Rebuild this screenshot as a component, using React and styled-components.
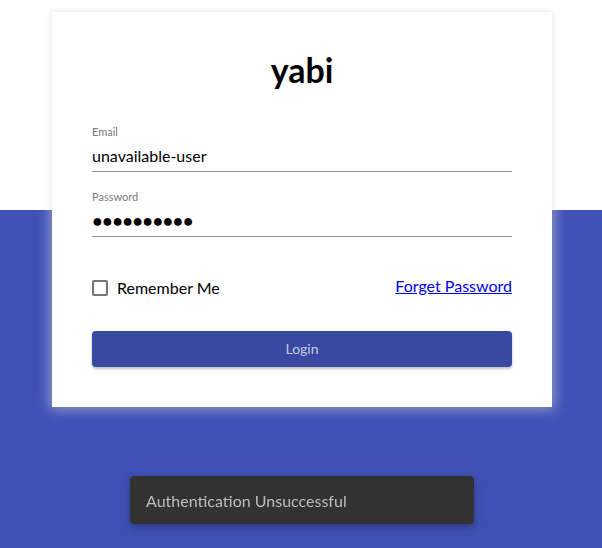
import React from 'react';
import styled, { createGlobalStyle } from 'styled-components';

const GlobalStyle = createGlobalStyle`
  html, body {
    margin: 0;
    padding: 0;
  }
  body {
    font-family: Lato, "Noto Sans", sans-serif;
  }
`;

const Page = styled.div`
  min-height: 100vh;
  padding: 12px 0 0 2px;
  box-sizing: border-box;
  background: linear-gradient(to bottom, #ffffff 0, #ffffff 210px, #3f51b5 210px);
`;

const Card = styled.form`
  width: 500px;
  margin: 0 auto;
  box-sizing: border-box;
  padding: 36px 40px 40px;
  background: #fff;
  box-shadow: 0 0 6px rgba(0, 0, 0, 0.12), 0 0 12px 2px rgba(255, 255, 255, 0.5);
`;

const Title = styled.h1`
  margin: 0 0 33px;
  text-align: center;
  font-size: 34px;
  line-height: 44px;
  font-weight: 700;
  color: #000;
`;

const Field = styled.label`
  display: flex;
  flex-direction: column;
  margin-bottom: ${(p) => p.gap || 0}px;
`;

const FieldLabel = styled.span`
  font-size: 11px;
  line-height: 14px;
  color: #7a7a7a;
`;

const Input = styled.input`
  box-sizing: border-box;
  margin-top: 4px;
  height: 29px;
  padding: 0 0 ${(p) => (p.$dots ? '2px' : '4px')};
  border: none;
  border-bottom: 1px solid #8e8e8e;
  outline: none;
  background: transparent;
  font-family: ${(p) => (p.$dots ? '"Liberation Sans", sans-serif' : 'inherit')};
  font-size: ${(p) => (p.$dots ? '18px' : '16px')};
  letter-spacing: ${(p) => (p.$dots ? '-0.8px' : 'normal')};
  color: #000;
`;

const OptionsRow = styled.div`
  display: flex;
  align-items: center;
  justify-content: space-between;
  margin-top: 38px;
  height: 24px;
`;

const Remember = styled.label`
  display: flex;
  align-items: center;
  gap: 9px;
  font-size: 16px;
  color: #000;
`;

const Box = styled.span`
  width: 16px;
  height: 16px;
  box-sizing: border-box;
  border: 2px solid #757575;
  border-radius: 2px;
  margin-top: 1px;
`;

const ForgetLink = styled.a`
  font-size: 16px;
  color: #0000ee;
  text-decoration: underline;
  margin-top: -4px;
`;

const LoginButton = styled.button`
  display: block;
  width: 100%;
  height: 36px;
  margin-top: 32px;
  border: none;
  border-radius: 4px;
  background: #3948a1;
  color: #c5cae9;
  font-family: inherit;
  font-size: 14px;
  line-height: 34px;
  box-shadow: 0 2px 3px rgba(0, 0, 0, 0.25);
  cursor: pointer;
`;

const Snackbar = styled.div`
  position: fixed;
  left: 50%;
  bottom: 24px;
  transform: translateX(calc(-50% + 1px));
  width: 344px;
  height: 48px;
  box-sizing: border-box;
  padding: 0 16px;
  display: flex;
  align-items: center;
  border-radius: 4px;
  background: #323232;
  color: #bdbdbd;
  font-size: 16px;
  box-shadow: 0 3px 8px rgba(0, 0, 0, 0.3);
`;

const App = () => (
  <>
    <GlobalStyle />
    <Page>
      <Card onSubmit={(e) => e.preventDefault()}>
        <Title>yabi</Title>
        <Field gap={18}>
          <FieldLabel>Email</FieldLabel>
          <Input type="text" defaultValue="unavailable-user" />
        </Field>
        <Field>
          <FieldLabel>Password</FieldLabel>
          <Input type="text" $dots readOnly value={'\u25CF'.repeat(10)} />
        </Field>
        <OptionsRow>
          <Remember>
            <Box />
            Remember Me
          </Remember>
          <ForgetLink href="#">Forget Password</ForgetLink>
        </OptionsRow>
        <LoginButton type="submit">Login</LoginButton>
      </Card>
      <Snackbar>Authentication Unsuccessful</Snackbar>
    </Page>
  </>
);

export default App;
